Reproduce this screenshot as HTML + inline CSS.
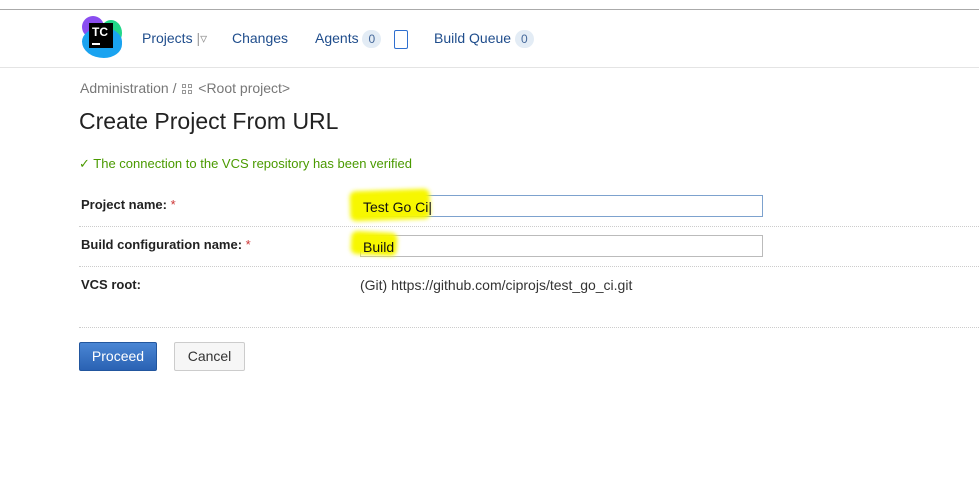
<!DOCTYPE html>
<html><head><meta charset="utf-8"><style>
body{margin:0;width:979px;height:491px;background:#fff;font-family:"Liberation Sans",sans-serif;position:relative;overflow:hidden;color:#333}
.abs{position:absolute;white-space:nowrap}
.top{position:absolute;left:0;top:9px;width:979px;height:1px;background:#aaa}
.hdr{position:absolute;left:0;top:67px;width:979px;height:1px;background:#e4e4e4}
.nav{font-size:14px;color:#1f4d8c}
.badge{display:inline-block;background:#e3ecf5;border-radius:9px;padding:0 6px;font-size:12px;color:#45689a;line-height:18px}
.lbl{font-size:13px;font-weight:bold;color:#222}
.star{color:#c33;font-weight:normal}
.dot{position:absolute;left:79px;width:900px;border-top:1px dotted #ccc;height:0}
.inp{position:absolute;left:360px;width:401px;height:20px;border:1px solid #bbb;background:#fff}
.hl{position:absolute;background:#f7f700;border-radius:6px;filter:blur(2px)}
</style></head><body>
<div class="top"></div>
<div class="abs" style="left:82px;top:16px;width:42px;height:42px">
 <div style="position:absolute;left:0;top:0;width:22px;height:22px;border-radius:50%;background:#8a4df0"></div>
 <div style="position:absolute;left:18px;top:4px;width:22px;height:26px;border-radius:50%;background:#21d789"></div>
 <div style="position:absolute;left:0;top:12px;width:40px;height:30px;border-radius:50% 50% 50% 60%;background:#1aa3f0"></div>
 <div style="position:absolute;left:7px;top:7px;width:24px;height:25px;background:#000;color:#fff;font-weight:bold;font-size:12px;line-height:14px;padding:2px 0 0 3px;box-sizing:border-box">TC<div style="width:8px;height:2px;background:#fff;margin-top:4px"></div></div>
</div>
<div class="abs nav" style="left:142px;top:30px">Projects <span style="color:#999">|▿</span></div>
<div class="abs nav" style="left:232px;top:30px">Changes</div>
<div class="abs nav" style="left:315px;top:30px">Agents <span class="badge">0</span></div>
<div class="abs" style="left:394px;top:30px;width:12px;height:17px;border:1.5px solid #2f6fcf;border-radius:2px"></div>
<div class="abs nav" style="left:434px;top:30px">Build Queue <span class="badge">0</span></div>
<div class="hdr"></div>
<div class="abs" style="left:80px;top:80px;font-size:14px;color:#777">Administration / <span style="display:inline-block;width:10px;height:10px;margin:0 2px;background:linear-gradient(90deg,transparent 4px,#fff 4px,#fff 6px,transparent 6px),linear-gradient(transparent 4px,#fff 4px,#fff 6px,transparent 6px),#999;vertical-align:-1px;position:relative"><span style="position:absolute;left:1px;top:1px;width:2px;height:2px;background:#fff"></span><span style="position:absolute;left:7px;top:1px;width:2px;height:2px;background:#fff"></span><span style="position:absolute;left:1px;top:7px;width:2px;height:2px;background:#fff"></span><span style="position:absolute;left:7px;top:7px;width:2px;height:2px;background:#fff"></span></span> &lt;Root project&gt;</div>
<div class="abs" style="left:79px;top:108px;font-size:23px;color:#222">Create Project From URL</div>
<div class="abs" style="left:79px;top:156px;font-size:13px;color:#4a9a00">✓ The connection to the VCS repository has been verified</div>
<div class="abs lbl" style="left:81px;top:197px">Project name: <span class="star">*</span></div>
<div class="inp" style="top:195px;border-color:#7da2ce"></div>
<div class="hl" style="left:350px;top:190px;width:80px;height:30px;transform:rotate(-2deg)"></div>
<div class="abs" style="left:363px;top:199px;font-size:14px;color:#111">Test Go Ci|</div>
<div class="dot" style="top:226px"></div>
<div class="abs lbl" style="left:81px;top:237px">Build configuration name: <span class="star">*</span></div>
<div class="inp" style="top:235px"></div>
<div class="hl" style="left:351px;top:232px;width:46px;height:23px;transform:rotate(3deg)"></div>
<div class="abs" style="left:363px;top:239px;font-size:14px;color:#111">Build</div>
<div class="dot" style="top:266px"></div>
<div class="abs lbl" style="left:81px;top:277px">VCS root:</div>
<div class="abs" style="left:360px;top:277px;font-size:14px;color:#333">(Git) https://github.com/ciprojs/test_go_ci.git</div>
<div class="dot" style="top:327px"></div>
<div class="abs" style="left:79px;top:342px;width:76px;height:27px;background:linear-gradient(#4a86d4,#2a62b3);border:1px solid #22569e;border-radius:2px;color:#fff;font-size:14px;line-height:27px;text-align:center">Proceed</div>
<div class="abs" style="left:174px;top:342px;width:69px;height:27px;background:#f6f6f6;border:1px solid #ccc;border-radius:2px;color:#333;font-size:14px;line-height:27px;text-align:center">Cancel</div>
</body></html>
